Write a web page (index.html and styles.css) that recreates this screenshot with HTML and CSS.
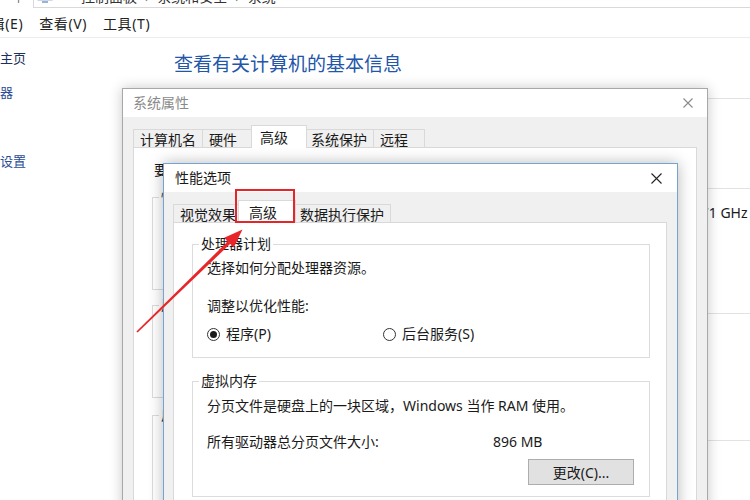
FILE: index.html
```html
<!DOCTYPE html>
<html lang="zh-CN">
<head>
<meta charset="utf-8">
<title>性能选项</title>
<link rel="stylesheet" href="styles.css">
</head>
<body>
<div class="explorer">
  <div class="addr-row">
    <span class="up">↑</span>
    <div class="addr">
      <svg class="addr-icon" width="16" height="14" viewBox="0 0 16 14"><rect x="1" y="1" width="14" height="9" fill="#d6e4f3" stroke="#9bb4d2"/><rect x="5" y="11" width="6" height="2" fill="#9bb4d2"/></svg>
      <span class="crumb">控制面板</span><span class="sep">›</span><span class="crumb">系统和安全</span><span class="sep">›</span><span class="crumb">系统</span>
    </div>
  </div>
  <div class="menubar"><span>编辑(E)</span><span>查看(V)</span><span>工具(T)</span></div>
  <div class="ex-body">
    <nav class="nav">
      <a class="nav-home">控制面板主页</a>
      <a class="nav-link">设备管理器</a>
      <a class="nav-link">远程设置</a>
      <a class="nav-link">系统保护</a>
      <a class="nav-link">高级系统设置</a>
    </nav>
    <main class="main">
      <h1 class="heading">查看有关计算机的基本信息</h1>
      <section class="sec sec-a"></section>
      <section class="sec sec-b">
        <div class="info-row"><span>处理器:</span><span>2.71 GHz</span></div>
      </section>
      <section class="sec sec-c"></section>
      <section class="sec sec-d"></section>
    </main>
  </div>
</div>

<div class="win sys">
  <div class="titlebar">
    <span class="title title-dim">系统属性</span>
    <svg class="close close-dim" width="10" height="10" viewBox="0 0 10 10"><path d="M0.5 0.5L9.5 9.5M9.5 0.5L0.5 9.5"/></svg>
  </div>
  <div class="win-body">
    <div class="tabs">
      <span class="tab">计算机名</span><span class="tab">硬件</span><span class="tab active">高级</span><span class="tab">系统保护</span><span class="tab">远程</span>
    </div>
    <div class="panel sys-panel">
      <p class="note">要进行大多数更改，你必须作为管理员登录。</p>
      <fieldset class="ghost g1"><legend>性能</legend></fieldset>
      <fieldset class="ghost g2"><legend>用户配置文件</legend></fieldset>
      <fieldset class="ghost g3"><legend>启动和故障恢复</legend></fieldset>
    </div>
  </div>
</div>

<div class="win perf">
  <div class="titlebar perf-title">
    <span class="title">性能选项</span>
    <svg class="close" width="11" height="11" viewBox="0 0 11 11"><path d="M0.5 0.5L10.5 10.5M10.5 0.5L0.5 10.5"/></svg>
  </div>
  <div class="win-body perf-body">
    <div class="tabs">
      <span class="tab">视觉效果</span><span class="tab active">高级</span><span class="tab">数据执行保护</span>
    </div>
    <div class="panel perf-panel">
      <fieldset class="grp grp-cpu">
        <legend>处理器计划</legend>
        <div class="grp-in">
          <p class="line">选择如何分配处理器资源。</p>
          <p class="line line-gap">调整以优化性能:</p>
          <div class="radios">
            <label class="radio on"><i></i><span>程序(P)</span></label>
            <label class="radio"><i></i><span>后台服务(S)</span></label>
          </div>
        </div>
      </fieldset>
      <fieldset class="grp grp-vm">
        <legend>虚拟内存</legend>
        <div class="grp-in">
          <p class="line vm-desc">分页文件是硬盘上的一块区域，Windows 当作 RAM 使用。</p>
          <div class="vm-row"><span class="vm-label">所有驱动器总分页文件大小:</span><span>896 MB</span></div>
          <div class="btn-row"><button class="btn">更改(C)...</button></div>
        </div>
      </fieldset>
    </div>
  </div>
</div>

<svg class="annot" width="750" height="500" viewBox="0 0 750 500">
  <rect x="236" y="190" width="58" height="32" fill="none" stroke="#e32629" stroke-width="2"/>
  <polygon points="136.4,331.4 137.6,332.6 230.3,243.8 227.9,241.2" fill="#e8262a"/>
  <polygon points="242.5,229.5 233.8,247.6 224.2,237.8" fill="#e8262a"/>
</svg>
</body>
</html>
```

FILE: styles.css
```css
* { box-sizing: border-box; }
html, body { margin: 0; padding: 0; }
body {
  width: 750px;
  height: 500px;
  overflow: hidden;
  position: relative;
  background: #fff;
  font-family: "Noto Sans", "Noto Sans CJK SC", sans-serif;
  font-size: 14px;
  color: #1a1a1a;
}

/* ---------- Explorer background ---------- */
.explorer { margin-top: -14px; }
.addr-row { display: flex; align-items: center; height: 22px; }
.up { width: 33px; padding-left: 12px; color: #666; font-size: 13px; line-height: 22px; }
.addr {
  flex: 1;
  height: 22px;
  border: 1px solid #d9d9d9;
  border-right: none;
  display: flex;
  align-items: center;
  gap: 8px;
  padding-left: 3px;
  color: #333;
  font-size: 14px;
  line-height: 20px;
  white-space: nowrap;
}
.addr-icon { margin-right: 20px; }
.sep { color: #777; }
.menubar {
  display: flex;
  gap: 16px;
  height: 30px;
  align-items: center;
  margin-left: -24px;
  border-bottom: 1px solid #ececec;
  font-size: 14px;
  letter-spacing: 0.6px;
  color: #222;
}
.ex-body { display: flex; }
.nav {
  width: 226px;
  margin-left: -52px;
  padding-top: 10px;
  display: flex;
  flex-direction: column;
  gap: 3px;
  font-size: 13px;
  line-height: 20px;
  white-space: nowrap;
}
.nav-home { color: #1d2f5e; margin-bottom: 11px; }
.nav-link { color: #2a4c94; }
.main { flex: 1; }
.heading {
  margin: 13px 0 21px;
  font-size: 19px;
  line-height: 26px;
  font-weight: normal;
  color: #2356a8;
  white-space: nowrap;
}
.sec { border-top: 1px solid #e2e2e2; }
.sec-a { height: 90px; }
.sec-b { height: 125px; padding-top: 12px; }
.sec-c { height: 127px; }
.sec-d { height: 60px; }
.info-row {
  display: grid;
  grid-template-columns: 515px auto;
  line-height: 24px;
  font-size: 14px;
  color: #1a1a1a;
  white-space: nowrap;
}

/* ---------- Dialog windows ---------- */
.win {
  position: absolute;
  background: #f0f0f0;
  display: flex;
  flex-direction: column;
}
.sys {
  left: 122px;
  top: 88px;
  width: 586px;
  height: 440px;
  border: 1px solid #a8a8a8;
  box-shadow: 0 0 12px rgba(0, 0, 0, 0.22);
}
.perf {
  left: 163px;
  top: 163px;
  width: 515px;
  height: 360px;
  border: 1px solid #74a3d6;
  box-shadow: 0 0 14px rgba(0, 0, 0, 0.28);
}
.titlebar {
  flex: none;
  height: 28px;
  background: #fff;
  display: flex;
  align-items: center;
  justify-content: space-between;
  padding: 0 14px 0 10px;
}
.perf-title { padding: 0 15px 0 11px; }
.title { font-size: 14px; line-height: 20px; color: #1a1a1a; }
.title-dim { color: #8a8a8a; }
.close path { stroke: #222; stroke-width: 1.1; fill: none; }
.close-dim path { stroke: #8a8a8a; }

.win-body { flex: 1; display: flex; flex-direction: column; padding: 8px 10px 0 10px; }
.perf-body { padding: 8px 10px 0 9px; }

.tabs {
  display: flex;
  align-items: flex-end;
  height: 22px;
  position: relative;
  z-index: 1;
}
.tab {
  height: 18px;
  min-width: 52px;
  padding: 0 6px;
  margin-right: -1px;
  display: flex;
  align-items: center;
  border: 1px solid #d9d9d9;
  border-bottom: none;
  background: #f0f0f0;
  font-size: 14px;
  white-space: nowrap;
  color: #1a1a1a;
}
.tab.active {
  height: 23px;
  min-width: 56px;
  padding: 0 8px;
  margin: 0 -3px -1px -2px;
  background: #fff;
  position: relative;
  z-index: 2;
}
.perf .tab.active { margin-left: -4px; padding-left: 10px; min-width: 58px; }

.panel {
  flex: 1;
  background: #fff;
  border: 1px solid #d9d9d9;
}
.sys-panel { padding: 12px 18px 0 18px; }
.note { margin: 0; padding-left: 2px; line-height: 20px; white-space: nowrap; }
.ghost {
  margin: 7px 0 0;
  padding: 0 0 0 6px;
  border: 1px solid #dcdcdc;
  min-inline-size: 0;
}
.ghost legend { padding: 0 2px; line-height: 20px; white-space: nowrap; }
.g1 { height: 103px; }
.g2 { height: 103px; margin-top: 5px; }
.g3 { height: 100px; }

.perf-panel { padding: 11px 16px 0 18px; }
.grp {
  margin: 0;
  padding: 0 0 0 6px;
  border: 1px solid #dcdcdc;
  min-inline-size: 0;
}
.grp legend { padding: 0 2px; line-height: 20px; font-size: 14px; white-space: nowrap; }
.grp-in { padding-left: 8px; }
.grp-cpu .grp-in { padding-top: 4px; padding-bottom: 13px; }
.grp-vm { margin-top: 13px; }
.grp-vm .grp-in { padding-top: 5px; padding-bottom: 11px; }
.line { margin: 0; line-height: 20px; white-space: nowrap; }
.line-gap { margin-top: 18px; }

.radios { display: flex; margin-top: 8px; line-height: 20px; }
.radio { display: flex; align-items: center; gap: 6px; white-space: nowrap; }
.radio:first-child { width: 176px; }
.radio i {
  width: 13px;
  height: 13px;
  border: 1px solid #333;
  border-radius: 50%;
  background: #fff;
  display: flex;
  align-items: center;
  justify-content: center;
}
.radio.on i::after {
  content: "";
  width: 7px;
  height: 7px;
  border-radius: 50%;
  background: #1a1a1a;
}

.vm-row { display: flex; margin-top: 16px; line-height: 20px; white-space: nowrap; }
.vm-label { width: 286px; }
.btn-row { display: flex; justify-content: flex-end; margin-top: 7px; padding-right: 15px; }
.btn {
  width: 106px;
  height: 26px;
  background: #e1e1e1;
  border: 1px solid #adadad;
  font-family: inherit;
  font-size: 14px;
  color: #1a1a1a;
  padding: 0;
}

.annot { position: absolute; left: 0; top: 0; z-index: 10; pointer-events: none; }
```
